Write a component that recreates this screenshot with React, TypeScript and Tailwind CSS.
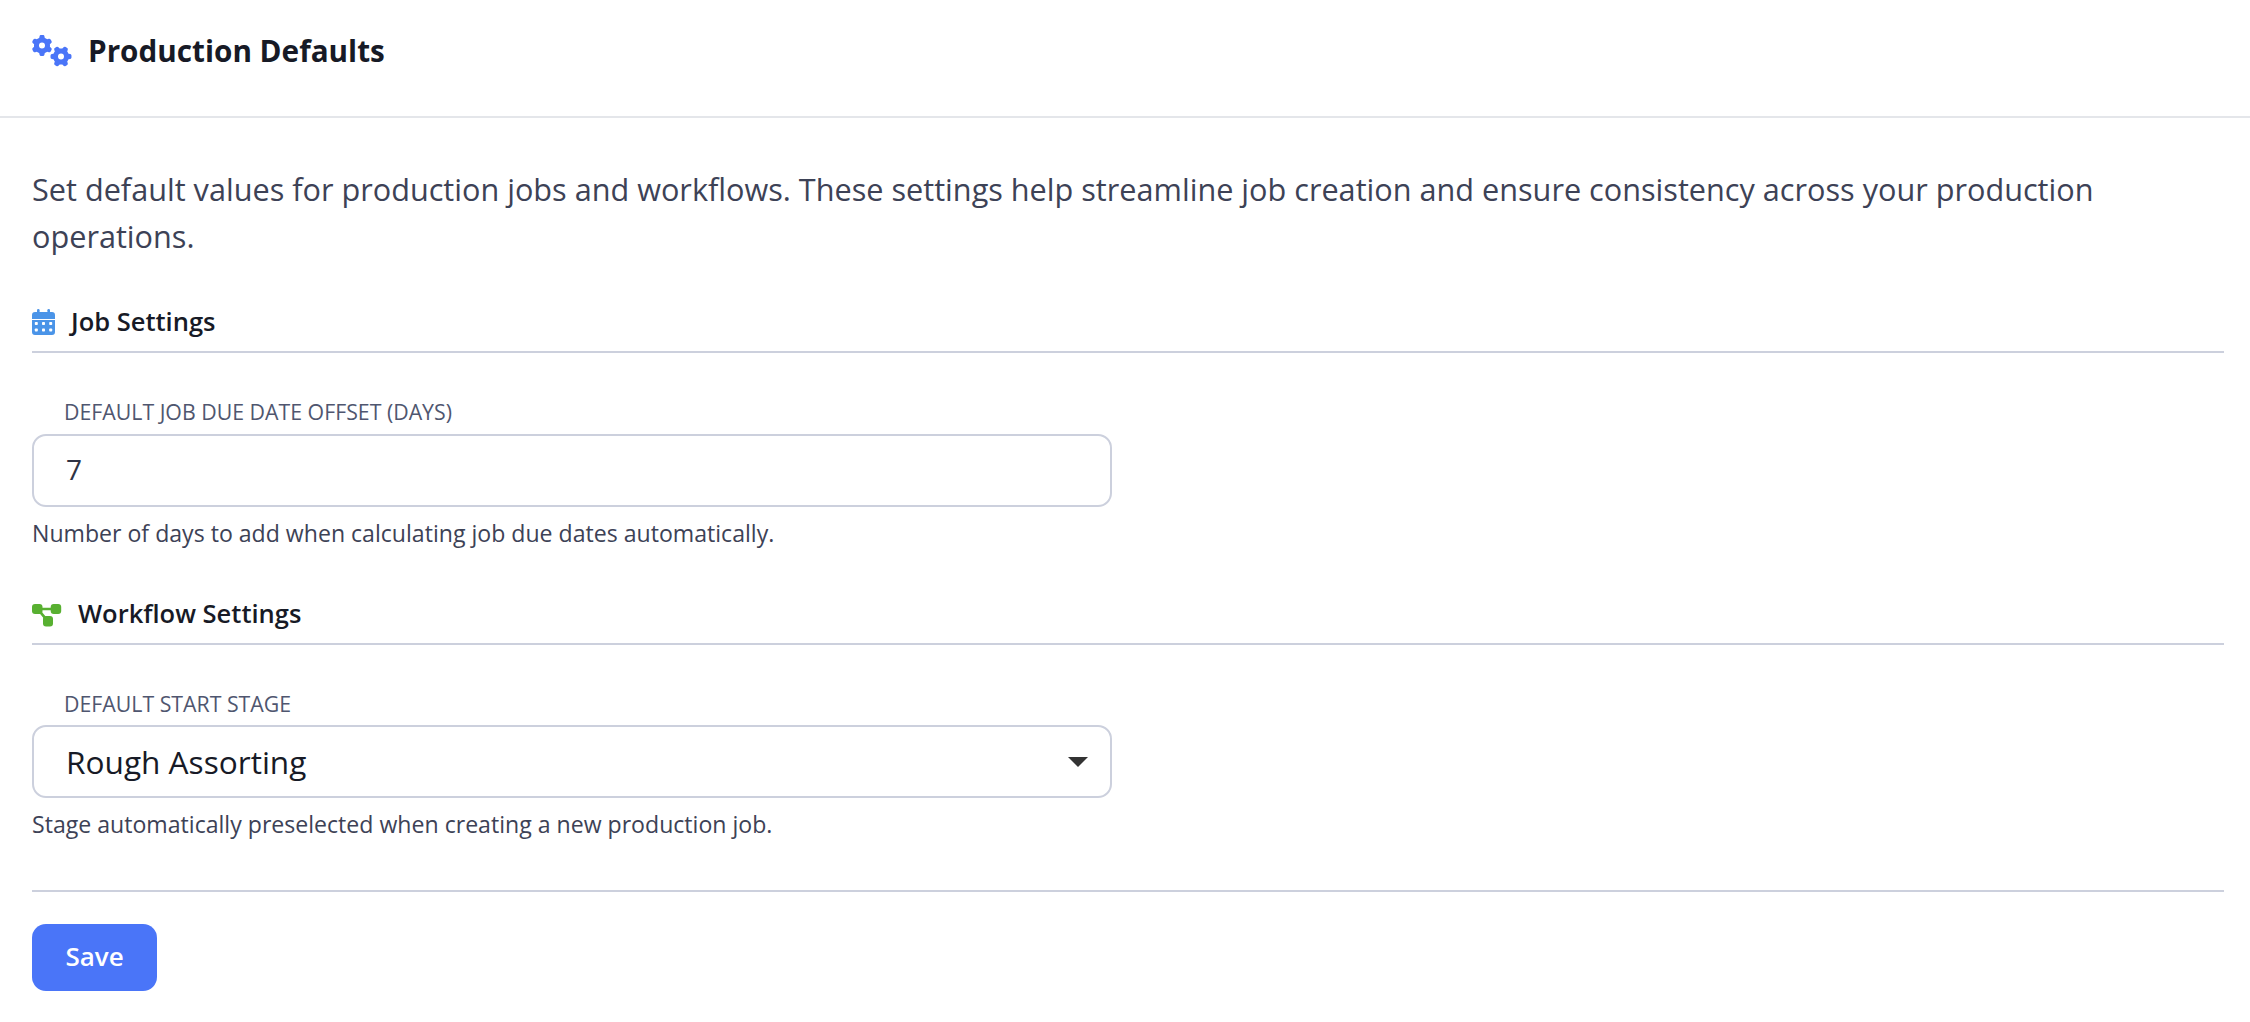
import { FaGears } from "react-icons/fa6";

function CalendarIcon() {
  return (
    <svg viewBox="0 0 23 26" className="w-[23px] h-[26px] text-[#4a94e8] fill-current" aria-hidden="true">
      <rect x="5" y="0" width="2.6" height="5" rx="1.2" />
      <rect x="15.4" y="0" width="2.6" height="5" rx="1.2" />
      <path d="M3 3h17a3 3 0 0 1 3 3v4H0V6a3 3 0 0 1 3-3zM0 11h23v12a3 3 0 0 1-3 3H3a3 3 0 0 1-3-3z" />
      <g className="fill-white">
        <rect x="2.8" y="13" width="3" height="3" rx="0.8" />
        <rect x="10" y="13" width="3" height="3" rx="0.8" />
        <rect x="17.2" y="13" width="3" height="3" rx="0.8" />
        <rect x="2.8" y="19.5" width="3" height="3" rx="0.8" />
        <rect x="10" y="19.5" width="3" height="3" rx="0.8" />
        <rect x="17.2" y="19.5" width="3" height="3" rx="0.8" />
      </g>
    </svg>
  );
}

function WorkflowIcon() {
  return (
    <svg viewBox="0 0 30 24" className="mt-[3px] w-[30px] h-[24px] text-[#58b031] fill-current" aria-hidden="true">
      <rect x="0" y="1" width="10.5" height="10" rx="3" />
      <rect x="18.7" y="1" width="10.5" height="10" rx="3" />
      <rect x="11" y="13" width="10" height="10.5" rx="3" />
      <path d="M8 4.7h14v2.6H8zM6.5 9l2-1.7 7 8.4-2 1.7z" />
    </svg>
  );
}

function SectionHeading({ icon, title }: { icon: React.ReactNode; title: string }) {
  return (
    <div className="flex items-center gap-[16px] h-[47px] pb-[14px] border-b-2 border-[#ccd0dd]">
      {icon}
      <h3 className="text-[25.5px] font-semibold text-[#171a26] leading-none">{title}</h3>
    </div>
  );
}

export default function App() {
  return (
    <div className="min-h-[1022px] bg-white font-['Open_Sans','Liberation_Sans',sans-serif]">
      <header className="flex items-center gap-[16px] h-[118px] px-[32px] pb-[16px] border-b-2 border-[#e4e6ea]">
        <FaGears className="text-[#4a75f8] w-[40px] h-[33px]" />
        <h2 className="mt-[2px] text-[29.7px] font-bold text-[#171a26] leading-none">Production Defaults</h2>
      </header>

      <main className="pl-[32px] pr-[26px]">
        <p className="mt-[48px] text-[30.65px] leading-[47px] text-[#3d4256]">
          Set default values for production jobs and workflows. These settings help streamline job creation and ensure consistency across your production operations.
        </p>

        <section className="mt-[46px]">
          <SectionHeading icon={<CalendarIcon />} title="Job Settings" />
          <label className="block mt-[46px] pl-[32px] text-[21.3px] leading-[26px] text-[#4f566f] uppercase">
            Default Job Due Date Offset (Days)
          </label>
          <input
            readOnly
            value="7"
            className="block mt-[9px] w-[1080px] h-[73px] px-[32px] pb-[3px] rounded-[14px] border-2 border-[#ccd0dd] text-[28px] text-[#2f3344] outline-none"
          />
          <p className="mt-[10px] text-[23.1px] leading-[33px] text-[#3d4256]">
            Number of days to add when calculating job due dates automatically.
          </p>
        </section>

        <section className="mt-[48px]">
          <SectionHeading icon={<WorkflowIcon />} title="Workflow Settings" />
          <label className="block mt-[46px] pl-[32px] text-[21.3px] leading-[26px] text-[#4f566f] uppercase">
            Default Start Stage
          </label>
          <div className="flex items-center justify-between mt-[8px] w-[1080px] h-[73px] pl-[32px] pr-[22px] rounded-[14px] border-2 border-[#ccd0dd]">
            <span className="text-[31.6px] text-[#171a26]">Rough Assorting</span>
            <svg viewBox="0 0 20 10" className="w-[20px] h-[10px] fill-[#333333]" aria-hidden="true">
              <path d="M0 0h20L10 10z" />
            </svg>
          </div>
          <p className="mt-[10px] text-[23.1px] leading-[33px] text-[#3d4256]">
            Stage automatically preselected when creating a new production job.
          </p>
        </section>

        <div className="mt-[49px] pt-[32px] border-t-2 border-[#ccd0dd]">
          <button className="w-[125px] h-[67px] pb-[2px] rounded-[14px] bg-[#4a75f8] text-white text-[26px] font-semibold">
            Save
          </button>
        </div>
      </main>
    </div>
  );
}
